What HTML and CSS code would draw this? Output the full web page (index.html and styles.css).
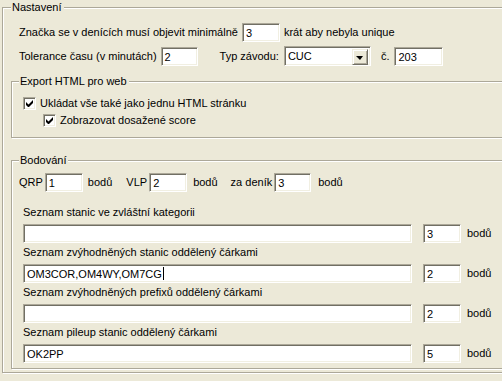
FILE: index.html
```html
<!DOCTYPE html>
<html lang="cs">
<head>
<meta charset="utf-8">
<title>Nastavení</title>
<link rel="stylesheet" href="styles.css">
</head>
<body>
<div class="group outer">
  <span class="legend">Nastavení</span>
  <div class="row r1">
    <span class="lbl">Značka se v denících musí objevit minimálně</span>
    <span class="edit w38 m-l4">3</span>
    <span class="lbl m-l4">krát aby nebyla unique</span>
  </div>
  <div class="row r2">
    <span class="lbl">Tolerance času (v minutách)</span>
    <span class="edit w37 m-l4">2</span>
    <span class="lbl m-l22">Typ závodu:</span>
    <span class="combo m-l5"><span class="combo-text">CUC</span><span class="combo-btn"><span class="arrow"></span></span></span>
    <span class="lbl m-l10">č.</span>
    <span class="edit w49 m-l5">203</span>
  </div>

  <div class="group export">
    <span class="legend">Export HTML pro web</span>
    <div class="check-row">
      <span class="check"><svg width="7" height="7" viewBox="0 0 7 7"><path d="M0 2v3l2 2h1l4-4V0L2.5 4.5z" fill="#000"/></svg></span>
      <span class="lbl">Ukládat vše také jako jednu HTML stránku</span>
    </div>
    <div class="check-row sub">
      <span class="check"><svg width="7" height="7" viewBox="0 0 7 7"><path d="M0 2v3l2 2h1l4-4V0L2.5 4.5z" fill="#000"/></svg></span>
      <span class="lbl">Zobrazovat dosažené score</span>
    </div>
  </div>

  <div class="group scoring">
    <span class="legend">Bodování</span>
    <div class="row pts">
      <span class="lbl">QRP</span>
      <span class="edit w38 m-l2">1</span>
      <span class="lbl m-l5">bodů</span>
      <span class="lbl m-l14">VLP</span>
      <span class="edit w38 m-l2">2</span>
      <span class="lbl m-l6">bodů</span>
      <span class="lbl m-l13">za deník</span>
      <span class="edit w37 m-l2">3</span>
      <span class="lbl m-l7">bodů</span>
    </div>
    <div class="lists">
      <div class="list">
        <div class="list-label">Seznam stanic ve zvláštní kategorii</div>
        <div class="row">
          <span class="edit long"></span>
          <span class="edit w38 m-l11">3</span>
          <span class="lbl m-l6">bodů</span>
        </div>
      </div>
      <div class="list">
        <div class="list-label">Seznam zvýhodněných stanic oddělený čárkami</div>
        <div class="row">
          <span class="edit long">OM3COR,OM4WY,OM7CG<span class="caret"></span></span>
          <span class="edit w38 m-l11">2</span>
          <span class="lbl m-l6">bodů</span>
        </div>
      </div>
      <div class="list">
        <div class="list-label">Seznam zvýhodněných prefixů oddělený čárkami</div>
        <div class="row">
          <span class="edit long"></span>
          <span class="edit w38 m-l11">2</span>
          <span class="lbl m-l6">bodů</span>
        </div>
      </div>
      <div class="list">
        <div class="list-label">Seznam pileup stanic oddělený čárkami</div>
        <div class="row">
          <span class="edit long">OK2PP</span>
          <span class="edit w38 m-l11">5</span>
          <span class="lbl m-l6">bodů</span>
        </div>
      </div>
    </div>
  </div>
</div>
</body>
</html>
```
FILE: styles.css
```css
html, body {
  margin: 0;
  padding: 0;
  background: #ECE9D8;
  overflow: hidden;
  width: 502px;
  height: 381px;
}
body {
  font-family: "Liberation Sans", Arial, sans-serif;
  font-size: 11px;
  color: #000;
  line-height: 13px;
}
.group {
  position: relative;
  border: 1px solid #ACA899;
  box-shadow: inset 1px 1px 0 #fff, 1px 1px 0 #fff;
}
.legend {
  position: absolute;
  top: -7px;
  left: 7px;
  padding: 0 2px 0 1px;
  background: #ECE9D8;
  line-height: 13px;
  white-space: nowrap;
}
.outer {
  margin: 7px -20px 0 2px;
  padding: 15px 0 3px 8px;
}
.outer > .legend { left: 8px; }
.row {
  display: flex;
  align-items: center;
  white-space: nowrap;
}
.r1, .r2 { margin-left: 8px; height: 19px; }
.r2 { margin-top: 4px; height: 20px; }
.lbl { white-space: nowrap; }
.edit {
  display: inline-block;
  box-sizing: border-box;
  height: 19px;
  background: #fff;
  border: 1px solid;
  border-color: #ACA899 #fff #fff #ACA899;
  box-shadow: inset 1px 1px 0 #716F64, inset -1px -1px 0 #F1EFE2;
  padding: 2px 3px 0 3px;
  line-height: 14px;
  white-space: nowrap;
  position: relative;
}
.w37 { width: 37px; }
.w38 { width: 38px; }
.w49 { width: 49px; }
.long { width: 389px; }
.m-l2 { margin-left: 2px; }
.m-l4 { margin-left: 4px; }
.m-l5 { margin-left: 5px; }
.m-l6 { margin-left: 6px; }
.m-l7 { margin-left: 7px; }
.m-l10 { margin-left: 10px; }
.m-l11 { margin-left: 11px; }
.m-l13 { margin-left: 13px; }
.m-l14 { margin-left: 14px; }
.m-l22 { margin-left: 22px; }
.combo {
  display: inline-flex;
  box-sizing: border-box;
  width: 87px;
  height: 20px;
  background: #fff;
  border: 1px solid;
  border-color: #ACA899 #fff #fff #ACA899;
  box-shadow: inset 1px 1px 0 #716F64, inset -1px -1px 0 #F1EFE2;
  padding: 2px;
}
.combo-text {
  flex: 1;
  padding-left: 1px;
  line-height: 14px;
}
.combo-btn {
  box-sizing: border-box;
  width: 16px;
  height: 16px;
  background: #ECE9D8;
  border: 1px solid;
  border-color: #F1EFE2 #716F64 #716F64 #F1EFE2;
  box-shadow: inset 1px 1px 0 #fff, inset -1px -1px 0 #ACA899;
  display: flex;
  align-items: center;
  justify-content: center;
}
.arrow {
  width: 0;
  height: 0;
  border-left: 4px solid transparent;
  border-right: 3px solid transparent;
  border-top: 4px solid #000;
  margin-top: 1px;
}
.caret {
  display: inline-block;
  width: 1px;
  height: 13px;
  background: #000;
  vertical-align: top;
  margin-left: 1px;
}
.export {
  margin: 15px 0 0 0;
  width: 485px;
  padding: 15px 0 10px 11px;
}
.check-row {
  display: flex;
  align-items: center;
  height: 13px;
}
.check-row.sub {
  margin-top: 4px;
  margin-left: 20px;
}
.check {
  box-sizing: border-box;
  width: 13px;
  height: 13px;
  background: #fff;
  border: 1px solid;
  border-color: #ACA899 #fff #fff #ACA899;
  box-shadow: inset 1px 1px 0 #716F64, inset -1px -1px 0 #F1EFE2;
  display: flex;
  align-items: center;
  justify-content: center;
  margin-right: 4px;
}
.check svg { display: block; }
.scoring {
  margin: 22px 0 0 0;
  width: 485px;
  padding: 12px 0 5px 7px;
}
.pts { height: 19px; }
.lists {
  margin: 14px 0 0 4px;
}
.list + .list { margin-top: 3px; }
.list-label {
  line-height: 13px;
  height: 13px;
  margin-bottom: 5px;
  white-space: nowrap;
}
.list .row { height: 19px; }
```
